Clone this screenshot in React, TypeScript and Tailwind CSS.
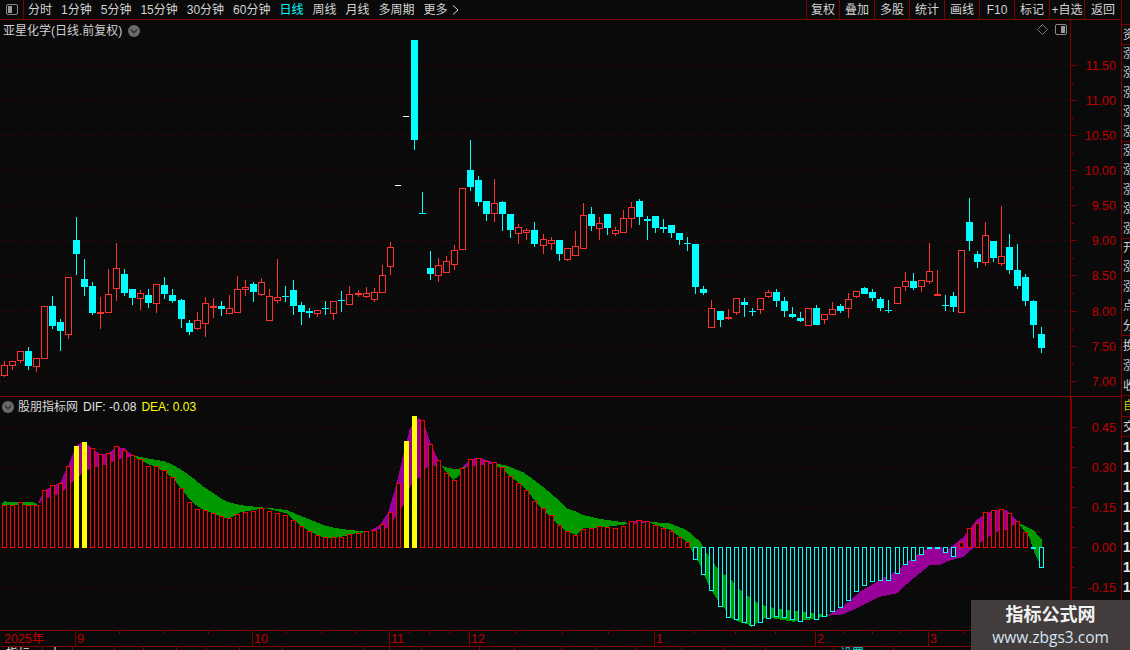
import React from "react";

type C = [number, "r" | "c", number, number, number, number];
const BG = "#0a0a0a";
const RED = "#ff3232";
const CY = "#00ffff";

const z3: C[] = [
  [13,"r",496,527,484,530],[37,"r",484,497,484,510],[61,"r",454,483,454,489],[85,"c",453,498,441,510],[109,"r",475,500,475,516],[133,"r",319,476,319,476],[157,"c",318,378,288,387],[181,"c",366,393,357,453],[205,"r",232,404,232,417],[229,"c",120,162,51,225],[253,"c",237,261,177,288],[277,"c",258,339,246,345],[301,"r",336,341,291,387],[325,"r",283,338,207,338],[349,"r",205,266,129,303],[373,"c",222,279,207,288],[397,"c",267,294,267,315],[421,"r",280,296,270,330],[445,"c",285,309,267,324],[469,"r",253,311,253,339],[493,"c",255,282,231,297],[517,"c",285,303,267,309],[544,"c",300,357,297,384],[568,"c",369,396,360,405],[592,"r",361,386,336,390],[616,"r",310,371,291,411],[640,"r",319,323,294,354],[664,"c",318,327,303,348],[688,"r",325,341,285,341],[712,"r",268,338,228,338],[736,"r",262,269,240,288],[760,"c",252,276,246,306],[784,"r",247,284,234,288],[808,"r",289,362,267,362],[832,"r",292,302,177,309],[856,"c",288,291,258,306],[880,"c",270,318,240,345],[904,"c",315,336,306,375],[928,"c",333,339,324,354],[952,"r",331,341,330,351],[976,"c",324,327,303,345],[1000,"r",304,341,304,360],[1024,"c",300,303,273,336],[1048,"r",283,314,258,314],[1075,"r",280,284,270,291],
];
const z4: C[] = [
  [19,"r",490,500,472,503],[43,"r",487,509,475,515],[67,"r",436,488,405,488],[91,"r",352,410,336,435],[163,"c",-270,30,-270,60],[187,"c",249,252,186,252],[211,"c",414,432,363,450],[235,"r",406,437,384,456],[259,"r",394,428,378,428],[283,"r",361,404,345,420],[307,"r",175,359,175,359],[331,"c",120,171,30,183],[355,"c",150,216,138,228],[379,"c",213,252,213,273],[403,"r",220,251,147,276],[427,"c",216,252,213,303],[451,"c",252,300,252,324],[475,"r",292,311,282,342],[499,"r",301,308,294,330],[523,"c",300,342,276,351],[550,"r",328,347,312,372],[574,"r",331,341,321,360],[598,"c",330,372,330,393],[622,"r",355,389,355,393],[646,"r",349,377,303,377],[670,"r",256,356,219,356],[694,"c",252,288,231,303],[718,"r",280,296,261,330],[742,"c",252,294,252,315],[766,"r",301,311,291,318],[790,"r",265,308,240,308],[814,"r",232,266,216,294],[838,"c",213,261,207,285],[862,"c",267,273,258,330],[886,"c",258,294,258,309],[910,"c",291,297,267,309],[934,"c",285,309,285,324],[958,"c",309,330,309,345],[982,"c",339,342,321,363],[1006,"c",342,471,342,492],[1030,"c",477,489,468,495],[1054,"r",535,593,510,593],
];
const z5: C[] = [
  [61,"c",363,390,363,411],[85,"r",381,387,357,390],[109,"r",325,368,325,375],[133,"c",336,345,324,381],[157,"c",363,366,354,378],[181,"r",325,359,325,372],[205,"r",307,320,300,324],[229,"c",306,333,297,351],[253,"c",333,363,321,381],[277,"c",372,381,351,384],[301,"c",384,393,366,396],[325,"r",355,407,355,407],[349,"c",354,405,345,405],[373,"r",373,389,373,402],[397,"r",358,374,336,374],[421,"c",348,363,342,369],[445,"r",328,356,309,384],[469,"r",304,320,304,324],[493,"c",294,312,291,312],[517,"c",306,324,297,333],[541,"c",327,354,321,363],[565,"c",360,363,330,369],[592,"r",292,341,292,341],[616,"r",274,290,246,303],[640,"c",273,294,249,300],[664,"r",271,290,271,306],[688,"r",244,275,159,282],[712,"r",313,319,240,319],[736,"c",345,348,315,363],[760,"c",318,351,306,366],[784,"r",181,368,181,368],[808,"c",96,153,24,183],[832,"c",192,216,183,234],[856,"r",136,218,96,228],[880,"c",153,204,153,216],[904,"r",199,221,48,228],[928,"c",171,240,132,252],[952,"c",240,288,162,297],[976,"c",261,333,252,348],[1000,"c",333,405,330,444],[1024,"c",432,474,411,489],
];

function Candles({ data, bx, by }: { data: C[]; bx: number; by: number }) {
  return (
    <>
      {data.map(([X, t, bt, bb, wt, wb], i) => {
        const c = bx + Math.floor(X / 3);
        const col = t === "r" ? RED : CY;
        const y1 = by + Math.floor(bt / 3);
        const y2 = by + Math.round(bb / 3);
        const w1 = by + Math.floor(wt / 3);
        const w2 = by + Math.round(wb / 3);
        const solid = t === "c" || y2 - y1 <= 2;
        return (
          <g key={i}>
            <rect x={c} y={w1} width={1} height={Math.max(1, w2 - w1)} fill={col} />
            {solid ? (
              <rect x={c - 3} y={y1} width={7} height={Math.max(1, y2 - y1)} fill={col} />
            ) : (
              <rect x={c - 2.5} y={y1 + 0.5} width={6} height={y2 - y1 - 1} fill={BG} stroke={RED} strokeWidth={1} />
            )}
          </g>
        );
      })}
    </>
  );
}

type B = [number, number, number?];
const b6 = [[13,331],[37,331],[61,323],[85,331],[109,331],[133,286],[157,271],[181,265],[205,214],[229,153,1],[253,141,1],[277,160],[301,178],[325,175],[349,154],[373,166],[397,181],[421,193],[445,214],[469,214],[493,226],[517,247],[544,280],[568,322],[592,343],[616,347],[640,355],[664,364],[688,370],[712,358],[736,352],[760,349],[784,340],[808,349],[832,355],[856,361],[880,376],[904,394],[928,409],[952,421],[976,427],[1000,427],[1024,427],[1048,418],[1075,415]] as B[];
const b7 = [[19,409],[43,406],[67,388],[91,352],[115,265],[139,138,1],[163,63,1],[187,76],[211,148],[235,196],[259,235],[283,256],[307,220],[331,193],[355,190],[379,199],[403,202],[427,217],[451,244],[475,265],[499,286],[523,319],[550,340],[574,361],[598,391],[622,409],[646,421],[670,403],[694,400],[718,394],[742,397],[766,400],[790,394],[814,379],[838,376],[862,379],[886,391],[910,400],[934,409],[958,427]] as B[];
const b8up = [[22,127],[844,127],[868,85],[892,70],[916,37],[940,31],[964,28],[988,40],[1012,64],[1036,97]] as B[];
const b8dn = [46,181,70,226,94,274,121,322,145,355,169,361,193,370,217,379,241,370,265,358,289,352,313,355,337,361,361,367,385,355,409,361,433,352,457,337,481,325,505,304,529,277,553,259,577,247,601,244,625,244,652,223,676,196,700,184,724,166,748,145,772,145,796,160,820,172,1060,144,1084,205];

const ZERO = 547;

function UpBars({ data, bx, by }: { data: B[]; bx: number; by: number }) {
  return (
    <>
      {data.map(([X, T, y], i) => {
        const c = bx + Math.floor(X / 3);
        const t = by + Math.floor(T / 3);
        return y ? (
          <rect key={i} x={c - 2} y={t} width={5} height={ZERO + 1 - t} fill="#ffff00" />
        ) : (
          <rect key={i} x={c - 1.5} y={t + 0.5} width={4} height={ZERO - t} fill={BG} stroke="#ff0000" strokeWidth={1} />
        );
      })}
    </>
  );
}

function DownBars() {
  const out: React.ReactNode[] = [];
  for (let i = 0; i < b8dn.length; i += 2) {
    const c = 680 + Math.floor(b8dn[i] / 3);
    const b = 500 + Math.round(b8dn[i + 1] / 3);
    out.push(
      b - ZERO <= 2 ? (
        <rect key={i} x={c - 2} y={ZERO} width={5} height={2} fill={CY} />
      ) : (
        <rect key={i} x={c - 1.5} y={ZERO + 0.5} width={4} height={b - ZERO - 1} fill={BG} stroke={CY} strokeWidth={1} />
      )
    );
  }
  return <>{out}</>;
}

const GREEN = "#009900";
const PURPLE = "#990099";
type Seg = { c: string; bx: number; by: number; p: number[][] };
const segs: Seg[] = [
  { c: GREEN, bx: 0, by: 395, p: [[4,331,331],[12,318,331],[30,322,331],[100,322,331],[112,328,328]] },
  { c: PURPLE, bx: 0, by: 395, p: [[112,328,328],[133,286,312],[181,262,295],[205,210,275],[229,150,250],[253,140,232],[277,162,218],[301,178,215],[325,175,205],[349,155,195],[373,160,187],[400,182,184]] },
  { c: GREEN, bx: 0, by: 395, p: [[400,182,184],[430,188,200],[490,198,228],[520,210,250],[550,228,290],[580,250,325],[610,275,345],[640,295,355],[670,315,368],[690,323,370],[720,330,352],[780,337,342],[800,338,340],[860,345,355],[900,362,392],[940,378,415],[970,390,427],[1000,398,430],[1040,404,422],[1080,408,412]] },
  { c: GREEN, bx: 360, by: 395, p: [[0,408,414],[30,408,409]] },
  { c: PURPLE, bx: 360, by: 395, p: [[30,407,409],[60,390,402],[85,350,400],[110,265,360],[130,180,330],[150,100,275],[175,68,250],[190,80,230],[210,140,210],[235,195,213],[245,213,214]] },
  { c: GREEN, bx: 360, by: 395, p: [[245,213,214],[280,222,255],[300,222,240],[318,208,218]] },
  { c: PURPLE, bx: 360, by: 395, p: [[305,218,218],[330,192,215],[360,188,210],[400,202,205]] },
  { c: GREEN, bx: 360, by: 395, p: [[400,204,206],[440,212,235],[490,232,275],[540,268,335],[590,310,385],[620,340,410],[648,350,420],[670,360,400],[720,372,398],[800,383,388]] },
  { c: PURPLE, bx: 360, by: 395, p: [[800,384,388],[830,376,385],[870,380,383]] },
  { c: GREEN, bx: 360, by: 395, p: [[870,381,383],[930,385,405],[980,405,440],[1020,440,510],[1050,490,580],[1080,530,625]] },
  { c: GREEN, bx: 680, by: 500, p: [[120,215,302],[150,235,352],[175,265,365],[200,285,372],[215,295,380],[235,310,365],[260,320,352],[340,332,365],[400,340,357],[445,343,347]] },
  { c: PURPLE, bx: 680, by: 500, p: [[445,345,347],[490,318,343],[540,275,320],[600,240,290],[650,212,280],[700,172,235],[750,140,195],[780,140,195],[800,150,185],[850,112,170],[890,60,135],[920,40,115],[950,30,95],[980,30,90],[1010,60,70],[1017,70,72]] },
  { c: GREEN, bx: 680, by: 500, p: [[1017,70,72],[1050,85,115],[1060,90,150],[1085,118,205]] },
];
function polyPts(s: Seg) {
  const up = s.p.map(([X, u]) => `${s.bx + X / 3},${s.by + u / 3}`);
  const lo = [...s.p].reverse().map(([X, , l]) => `${s.bx + X / 3},${s.by + l / 3}`);
  return [...up, ...lo].join(" ");
}

const mainGrid = [65, 100, 135, 170, 205, 240, 275, 311, 346, 381];
const mainLabels = ["11.50", "11.00", "10.50", "10.00", "9.50", "9.00", "8.50", "8.00", "7.50", "7.00"];
const macdGrid = [427, 467, 507, 547, 587];
const macdLabels = ["0.45", "0.30", "0.15", "0.00", "-0.15"];

function Grid({ ys }: { ys: number[] }) {
  return (
    <>
      {ys.map((y) => (
        <line key={y} x1={0} x2={1066} y1={y + 0.5} y2={y + 0.5} stroke="#5c0000" strokeWidth={1} strokeDasharray="1 4" />
      ))}
    </>
  );
}

function Axis({ ys, labels, top, h }: { ys: number[]; labels: string[]; top: number; h: number }) {
  const step = ys[1] - ys[0];
  return (
    <svg width={50} height={h} viewBox={`1071 ${top} 50 ${h}`} className="block shrink-0" shapeRendering="crispEdges">
      {ys.map((y, i) => (
        <g key={y}>
          <rect x={1071} y={y} width={6} height={1} fill="#800000" />
          <rect x={1071} y={Math.round(y + step / 2)} width={3} height={1} fill="#800000" />
          <text x={1116} y={y + 5} textAnchor="end" fontSize={12.5} fill="#c00000" shapeRendering="auto">
            {labels[i]}
          </text>
        </g>
      ))}
    </svg>
  );
}

function Chevron() {
  return (
    <svg width={12} height={12} viewBox="0 0 12 12" className="block shrink-0">
      <circle cx={6} cy={6} r={6} fill="#6a6a6a" />
      <path d="M3 4.8 L6 7.6 L9 4.8" fill="none" stroke="#2a2a2a" strokeWidth={1.2} />
    </svg>
  );
}

function SideIcon({ left }: { left: boolean }) {
  return (
    <svg width={12} height={11} viewBox="0 0 12 11" className="block shrink-0">
      <rect x={0.5} y={0.5} width={11} height={10} rx={1.5} fill="none" stroke="#8a8a8a" />
      <rect x={left ? 2 : 6} y={2} width={4} height={7} fill="#9a9a9a" />
    </svg>
  );
}

const tabs = ["分时", "1分钟", "5分钟", "15分钟", "30分钟", "60分钟", "日线", "周线", "月线", "多周期", "更多"];
const rightBtns: [string, string][] = [
  ["复权", "w-[33px]"], ["叠加", "w-[35px]"], ["多股", "w-[35px]"], ["统计", "w-[35px]"], ["画线", "w-[35px]"],
  ["F10", "w-[35px]"], ["标记", "w-[35px]"], ["+自选", "w-[35px]"], ["返回", "w-[37px]"],
];
const bottomTabs: [string, string, string][] = [
  ["指标", "w-[43px]", "text-[#e8e8e8]"], ["大", "w-[30px]", "text-[#e8e8e8]"], ["", "w-[42px]", ""], ["", "w-[29px]", ""], ["", "w-[33px]", ""], ["", "w-[30px]", ""], ["", "w-[33px]", ""], ["", "w-[43px]", ""],
  ["", "w-[81px]", ""], ["", "w-[26px]", ""], ["", "w-[32px]", ""], ["", "w-[58px]", ""], ["", "w-[35px]", ""], ["", "w-[47px]", ""], ["", "w-[35px]", ""], ["", "w-[40px]", ""],
  ["", "w-[45px]", ""], ["", "w-[42px]", ""], ["", "w-[42px]", ""], ["", "w-[68px]", ""], ["设置", "w-[60px]", "text-[#00e0e0]"],
];

const longTicks: [number, string][] = [[75, "9"], [252, "10"], [389, "11"], [469, "12"], [654, "1"], [815, "2"], [928, "3"]];
const shortTicks = [119, 164, 208, 286, 321, 355, 409, 429, 449, 515, 562, 608, 694, 735, 775, 843, 872, 900, 963, 1000, 1040];

function StripCell({ chars, h, color, lh }: { chars: string[]; h: string; color: string; lh: string }) {
  return (
    <div className={`${h} ${color} ${lh} w-[9px] shrink-0 overflow-hidden border-b border-[#800000] pl-[1px]`}>
      {chars.map((c, i) => (
        <div key={i} className="w-[12px] text-[12px]">
          {c}
        </div>
      ))}
    </div>
  );
}

export default function App() {
  return (
    <div className="relative flex h-[650px] w-[1130px] overflow-hidden bg-[#0a0a0a] text-[12px] text-[#d4d4d4] [font-family:'Liberation_Sans','Noto_Sans_CJK_SC',sans-serif]">
      <div className="flex h-full w-[1121px] shrink-0 flex-col">
        <div className="flex h-[20px] shrink-0 items-center border-b border-[#800000]">
          <div className="flex h-full w-[24px] shrink-0 items-center justify-center border-r border-[#800000]">
            <SideIcon left />
          </div>
          <div className="ml-[4px] flex items-center gap-[9px] whitespace-nowrap">
            {tabs.map((t) => (
              <span key={t} className={t === "日线" ? "text-[#00ffff]" : ""}>
                {t}
              </span>
            ))}
          </div>
          <svg width={7} height={10} viewBox="0 0 7 10" className="ml-[4px] block shrink-0">
            <path d="M1 0.5 L6 5 L1 9.5" fill="none" stroke="#d4d4d4" />
          </svg>
          <div className="ml-auto flex h-full">
            {rightBtns.map(([t, w]) => (
              <div key={t} className={`${w} flex h-full items-center justify-center whitespace-nowrap border-l border-[#800000]`}>
                {t}
              </div>
            ))}
          </div>
        </div>

        <div className="relative flex h-[376px] shrink-0">
          <svg width={1070} height={376} viewBox="0 20 1070 376" className="block shrink-0" shapeRendering="crispEdges">
            <Grid ys={mainGrid} />
            <Candles data={z3} bx={0} by={200} />
            <Candles data={z4} bx={360} by={130} />
            <Candles data={z5} bx={700} by={190} />
            <rect x={395} y={185} width={6} height={1} fill="#ffffff" />
            <rect x={403} y={116} width={6} height={1} fill="#ffffff" />
          </svg>
          <div className="w-px shrink-0 bg-[#800000]" />
          <Axis ys={mainGrid} labels={mainLabels} top={20} h={376} />
          <div className="absolute left-[3px] top-[2px] flex items-center gap-[6px] text-[#cfcfcf]">
            <span>亚星化学(日线.前复权)</span>
            <Chevron />
          </div>
          <div className="absolute left-[1037px] top-[4px] flex items-center gap-[7px]">
            <svg width={11} height={11} viewBox="0 0 11 11" className="block">
              <path d="M5.5 0.5 L10.5 5.5 L5.5 10.5 L0.5 5.5 Z" fill="none" stroke="#777777" />
            </svg>
            <SideIcon left={false} />
          </div>
        </div>

        <div className="h-[1px] shrink-0 bg-[#800000]" />

        <div className="relative flex h-[233px] shrink-0">
          <svg width={1070} height={233} viewBox="0 397 1070 233" className="block shrink-0" shapeRendering="crispEdges">
            <Grid ys={macdGrid} />
            {segs.map((s, i) => (
              <polygon key={i} points={polyPts(s)} fill={s.c} />
            ))}
            <UpBars data={b6} bx={0} by={395} />
            <UpBars data={b7} bx={360} by={395} />
            <UpBars data={b8up} bx={680} by={500} />
            <DownBars />
          </svg>
          <div className="w-[2px] shrink-0 bg-[#800000]" />
          <div className="-ml-px">
            <Axis ys={macdGrid} labels={macdLabels} top={397} h={233} />
          </div>
          <div className="absolute left-[2px] top-[1px] flex items-center whitespace-nowrap">
            <Chevron />
            <span className="ml-[4px] text-[#d8d8d8]">股朋指标网</span>
            <span className="ml-[5px] text-[#e4e4e4]">DIF: -0.08</span>
            <span className="ml-[5px] text-[#ffff00]">DEA: 0.03</span>
          </div>
        </div>

        <div className="h-[17px] shrink-0 border-y border-[#800000]">
          <svg width={1121} height={15} viewBox="0 631 1121 15" className="block" shapeRendering="crispEdges">
            {shortTicks.map((x) => (
              <rect key={x} x={x} y={631} width={1} height={3} fill="#800000" />
            ))}
            {longTicks.map(([x]) => (
              <rect key={x} x={x} y={631} width={1} height={15} fill="#800000" />
            ))}
            <text x={4} y={643} fontSize={12.5} fill="#c00000" shapeRendering="auto">
              2025年
            </text>
            {longTicks.map(([x, t]) => (
              <text key={t} x={x + 2} y={643} fontSize={12.5} fill="#c00000" shapeRendering="auto">
                {t}
              </text>
            ))}
          </svg>
        </div>

        <div className="flex h-[3px] shrink-0 overflow-hidden">
          {bottomTabs.map(([t, w, col], i) => (
            <div key={i} className={`${w} ${col} h-full shrink-0 overflow-hidden whitespace-nowrap border-r border-[#800000] pl-[6px] leading-[14px]`}>
              {t}
            </div>
          ))}
        </div>
      </div>

      <div className="flex h-full w-[9px] shrink-0 flex-col overflow-hidden border-l border-[#800000]">
        <div className="h-[25px] shrink-0 border-b border-[#800000]" />
        <StripCell chars={["资"]} h="h-[20px]" color="text-[#d4d4d4]" lh="leading-[20px]" />
        <StripCell chars={["涨", "涨", "涨", "涨", "涨"]} h="h-[97px]" color="text-[#d4d4d4]" lh="leading-[19.4px]" />
        <StripCell chars={["涨", "涨", "涨", "涨", "涨"]} h="h-[97px]" color="text-[#d4d4d4]" lh="leading-[19.4px]" />
        <StripCell chars={["开", "涨", "涨", "点", "分"]} h="h-[97px]" color="text-[#d4d4d4]" lh="leading-[19.4px]" />
        <StripCell chars={["换", "涨", "收"]} h="h-[60px]" color="text-[#d4d4d4]" lh="leading-[20px]" />
        <StripCell chars={["自"]} h="h-[21px]" color="text-[#c8c800]" lh="leading-[20px]" />
        <StripCell chars={["交"]} h="h-[20px]" color="text-[#d4d4d4]" lh="leading-[20px]" />
        <div className="w-[9px] pl-[1px] text-[14px] font-bold leading-[20px] text-[#e8e8e8]">
          {Array.from({ length: 11 }).map((_, i) => (
            <div key={i}>1</div>
          ))}
        </div>
      </div>

      <div className="absolute bottom-0 right-0 flex h-[50px] w-[159px] flex-col items-center bg-[#423c3c]">
        <div className="mt-[3px] text-[18px] font-bold leading-[24px] text-[#f2f2f2]">指标公式网</div>
        <div className="text-[15.5px] leading-[20px] text-[#d5e6f5] [font-family:'Open_Sans',sans-serif]">www.zbgs3.com</div>
      </div>
    </div>
  );
}
